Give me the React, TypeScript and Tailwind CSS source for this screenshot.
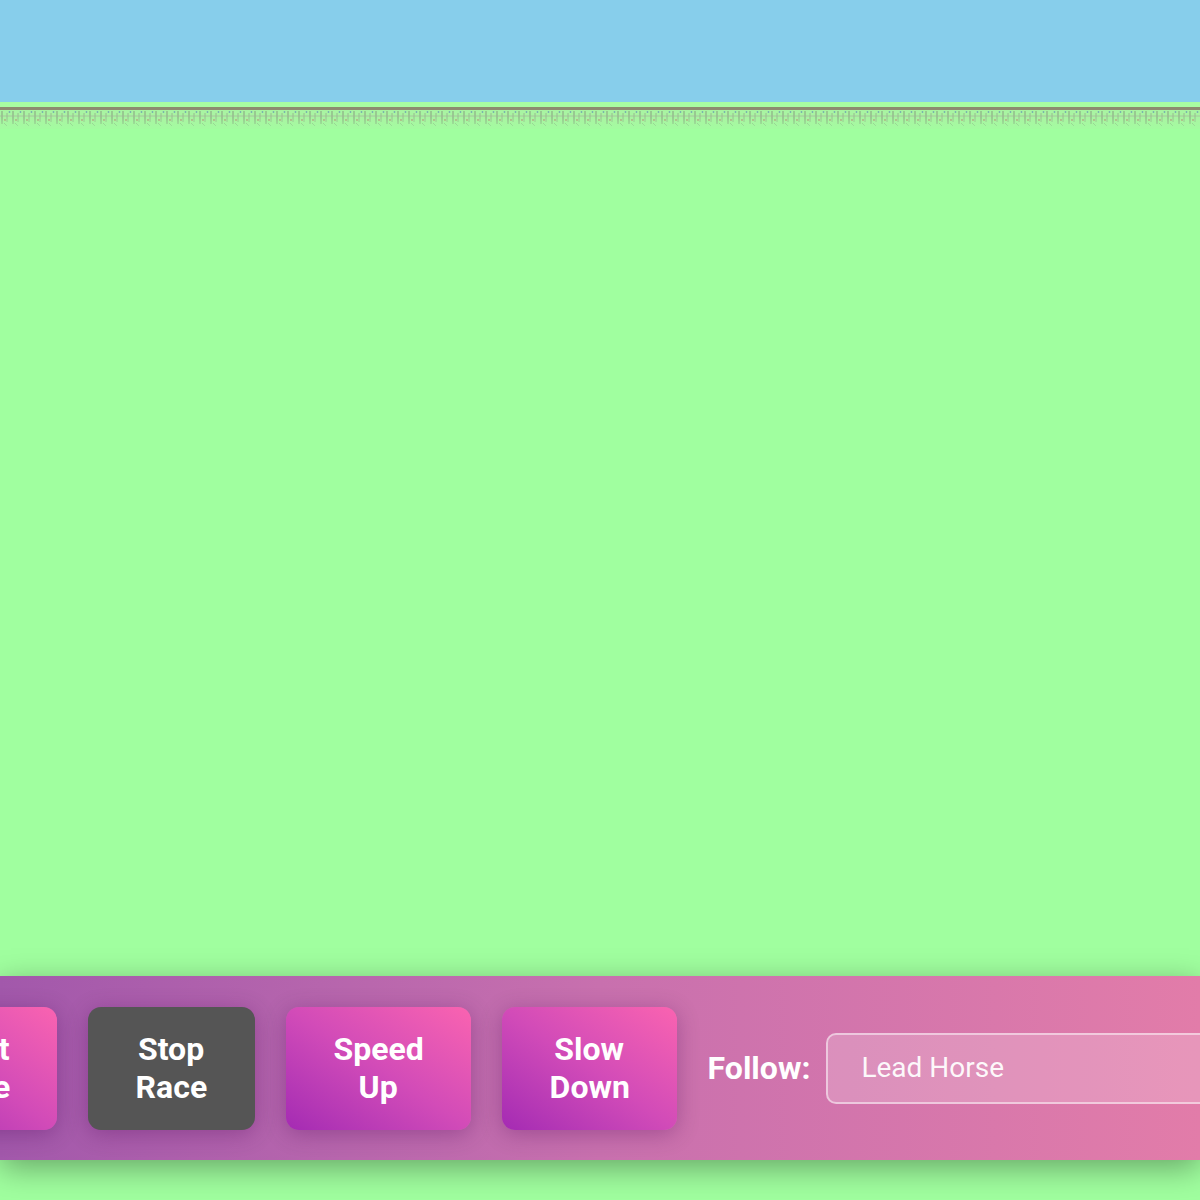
import React from 'react';

const buttons = [
  { label: 'Start Race', width: 'w-[166px]', kind: 'gradient' },
  { label: 'Stop Race', width: 'w-[167px]', kind: 'stop' },
  { label: 'Speed Up', width: 'w-[185px]', kind: 'gradient' },
  { label: 'Slow Down', width: 'w-[175px]', kind: 'gradient' },
];

// Fence / rail strip drawn under the sky line
function Fence() {
  return (
    <svg className="block w-full h-[19px]" preserveAspectRatio="none">
      <defs>
        <pattern id="rail" width="11" height="19" patternUnits="userSpaceOnUse">
          <rect width="11" height="19" fill="#a9f4a2" />
          <line x1="2" y1="1" x2="2" y2="14" stroke="#7e8c78" strokeWidth="1" opacity="0.8" />
          <line x1="7" y1="3" x2="7" y2="12" stroke="#8a9882" strokeWidth="1" opacity="0.6" />
          <line x1="0" y1="6" x2="11" y2="6" stroke="#a3b39a" strokeWidth="1" opacity="0.7" />
          <circle cx="5" cy="10" r="0.9" fill="#b9776a" opacity="0.7" />
          <circle cx="9.5" cy="2" r="0.9" fill="#5f8fb5" opacity="0.7" />
          <line x1="4" y1="13" x2="7" y2="16" stroke="#7e8c78" strokeWidth="1" opacity="0.5" />
        </pattern>
        <linearGradient id="fade" x1="0" y1="0" x2="0" y2="1">
          <stop offset="0.4" stopColor="#a0ff9f" stopOpacity="0" />
          <stop offset="1" stopColor="#a0ff9f" stopOpacity="0.7" />
        </linearGradient>
      </defs>
      <rect width="100%" height="19" fill="url(#rail)" />
      <rect width="100%" height="19" fill="url(#fade)" />
    </svg>
  );
}

function ControlButton({ label, width, kind }: { label: string; width: string; kind: string }) {
  const look =
    kind === 'stop'
      ? 'bg-[#555555]'
      : 'bg-gradient-to-tr from-[#a42ab3] via-[#d24bb8] to-[#fa63b0]';
  return (
    <button
      className={`${width} ${look} h-[123px] shrink-0 rounded-[13px] px-12 text-[32px] leading-[38px] font-bold text-white text-center shadow-[0_4px_22px_rgba(70,0,80,0.3)]`}
    >
      {label}
    </button>
  );
}

export default function App() {
  return (
    <div
      className="h-[1200px] w-full overflow-hidden flex flex-col bg-[#a0ff9f]"
      style={{ fontFamily: 'Roboto, "Liberation Sans", sans-serif' }}
    >
      <div className="h-[102px] shrink-0 bg-[#87ceeb]" />
      <div className="h-[5px] shrink-0 bg-[#a8fca1]" />
      <div className="h-[3px] shrink-0 bg-[#8d8a6f]" />
      <Fence />
      <div className="flex-1" />

      <div className="h-[184px] shrink-0 flex items-center justify-center gap-[31px] overflow-hidden bg-gradient-to-r from-[#a258ab] via-[#c870ae] to-[#e27ca9] shadow-[0_8px_30px_rgba(0,0,0,0.35)] relative z-10">
        {buttons.map((b) => (
          <ControlButton key={b.label} label={b.label} width={b.width} kind={b.kind} />
        ))}
        <div className="flex items-center gap-4 shrink-0">
          <span className="text-[32px] font-bold text-white">Follow:</span>
          <div className="w-[483px] h-[71px] flex items-center px-[33px] rounded-[10px] border-2 border-white/50 bg-white/20 text-[28px] text-white/95">
            Lead Horse
          </div>
        </div>
      </div>

      <div className="h-[40px] shrink-0" />
    </div>
  );
}
